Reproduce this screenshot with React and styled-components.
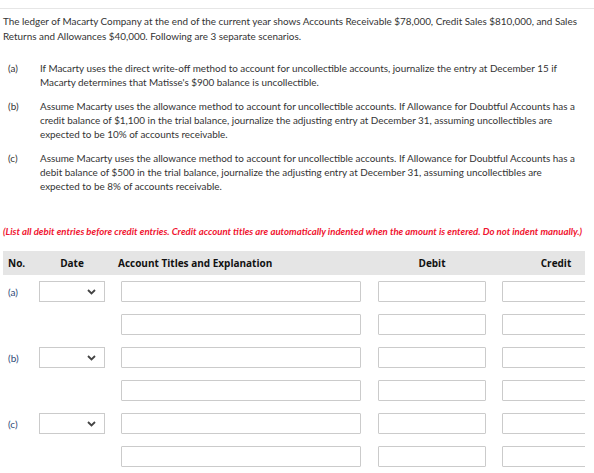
import React from "react";
import styled, { createGlobalStyle } from "styled-components";

const GlobalStyle = createGlobalStyle`
  body {
    margin: 0;
    background: #fff;
    font-family: Lato, "Open Sans", sans-serif;
    color: #333;
  }
`;

const Page = styled.div`
  width: 594px;
  height: 473px;
  overflow: hidden;
  padding-top: 8px;
  box-sizing: border-box;
`;

const Rule = styled.div`
  height: 1px;
  background: #e6e6e6;
`;

const Body = styled.div`
  padding: 5px 3px 0;
`;

const Intro = styled.p`
  margin: 0 0 18px;
  font-size: 9.9px;
  line-height: 14.5px;
`;

const Item = styled.div`
  display: flex;
  margin-bottom: 10px;
  font-size: 9.9px;
  line-height: 14px;
`;

const ItemLabel = styled.div`
  width: 37px;
  flex: none;
  padding-left: 5px;
  box-sizing: border-box;
`;

const ItemText = styled.div`
  flex: 1;
  padding-right: 10px;
`;

const Note = styled.p`
  margin: 32px 0 0;
  color: #f0142f;
  font-style: italic;
  font-weight: 700;
  font-size: 9.6px;
  line-height: 14px;
  white-space: nowrap;
`;

const Table = styled.div`
  margin-top: 12px;
  width: 582px;
  overflow: hidden;
`;

const cols = "36px 82px 257px 124px 124px";

const HeaderRow = styled.div`
  display: grid;
  grid-template-columns: ${cols};
  height: 24px;
  align-items: center;
  background: #e5e5e5;
  font-family: "Open Sans", sans-serif;
  font-weight: 700;
  font-size: 10px;
  color: #111;
`;

const HeadCell = styled.div`
  padding-left: ${(p) => p.$pad || 0}px;
  margin-left: ${(p) => p.$shift || 0}px;
  width: ${(p) => (p.$w ? p.$w + "px" : "auto")};
  text-align: ${(p) => (p.$center ? "center" : "left")};
  white-space: nowrap;
`;

const Row = styled.div`
  display: grid;
  grid-template-columns: ${cols};
  align-items: center;
  height: 33px;
`;

const RowLabel = styled.div`
  padding-left: 5px;
  font-size: 10px;
  color: #2d4a78;
`;

const Select = styled.div`
  width: 66px;
  height: 21px;
  box-sizing: border-box;
  border: 1px solid #cbcbcb;
  background: #fff;
  display: flex;
  align-items: center;
  justify-content: flex-end;
  padding-right: 8px;
`;

const Input = styled.div`
  width: ${(p) => p.$w}px;
  height: 21px;
  box-sizing: border-box;
  border: 1px solid #cbcbcb;
  border-radius: 1px;
  background: #fff;
`;

const Chevron = () => (
  <svg width="9" height="6" viewBox="0 0 9 6">
    <path d="M1 1 L4.5 4.5 L8 1" fill="none" stroke="#444" strokeWidth="1.8" />
  </svg>
);

const items = [
  {
    label: "(a)",
    text: "If Macarty uses the direct write-off method to account for uncollectible accounts, journalize the entry at December 15 if Macarty determines that Matisse's $900 balance is uncollectible.",
  },
  {
    label: "(b)",
    text: "Assume Macarty uses the allowance method to account for uncollectible accounts. If Allowance for Doubtful Accounts has a credit balance of $1,100 in the trial balance, journalize the adjusting entry at December 31, assuming uncollectibles are expected to be 10% of accounts receivable.",
  },
  {
    label: "(c)",
    text: "Assume Macarty uses the allowance method to account for uncollectible accounts. If Allowance for Doubtful Accounts has a debit balance of $500 in the trial balance, journalize the adjusting entry at December 31, assuming uncollectibles are expected to be 8% of accounts receivable.",
  },
];

const rows = [
  { label: "(a)", date: true },
  { label: "", date: false },
  { label: "(b)", date: true },
  { label: "", date: false },
  { label: "(c)", date: true },
  { label: "", date: false },
];

export default function App() {
  return (
    <Page>
      <GlobalStyle />
      <Rule />
      <Body>
        <Intro>
          The ledger of Macarty Company at the end of the current year shows
          Accounts Receivable $78,000, Credit Sales $810,000, and Sales Returns
          and Allowances $40,000. Following are 3 separate scenarios.
        </Intro>
        {items.map((it) => (
          <Item key={it.label}>
            <ItemLabel>{it.label}</ItemLabel>
            <ItemText>{it.text}</ItemText>
          </Item>
        ))}
        <Note>
          (List all debit entries before credit entries. Credit account titles
          are automatically indented when the amount is entered. Do not indent
          manually.)
        </Note>
        <Table>
          <HeaderRow>
            <HeadCell $pad={5}>No.</HeadCell>
            <HeadCell $w={66} $center>
              Date
            </HeadCell>
            <HeadCell $shift={-3}>Account Titles and Explanation</HeadCell>
            <HeadCell $w={108} $center>
              Debit
            </HeadCell>
            <HeadCell $w={108} $center>
              Credit
            </HeadCell>
          </HeaderRow>
          {rows.map((r, i) => (
            <Row key={i}>
              <RowLabel>{r.label}</RowLabel>
              <div>
                {r.date && (
                  <Select>
                    <Chevron />
                  </Select>
                )}
              </div>
              <Input $w={240} />
              <Input $w={108} />
              <Input $w={108} />
            </Row>
          ))}
        </Table>
      </Body>
    </Page>
  );
}
